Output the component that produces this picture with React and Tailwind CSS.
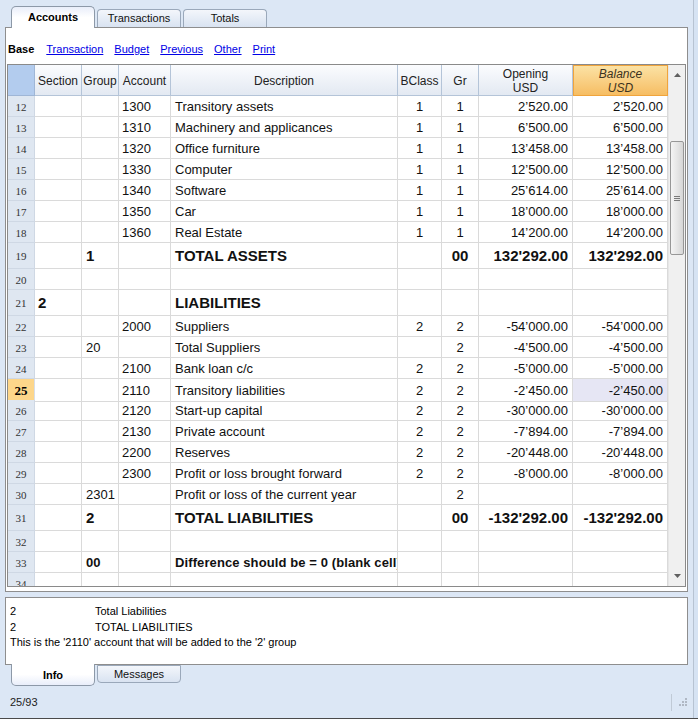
import React from 'react';

const cols = 'grid grid-cols-[27px_47px_37px_52px_227px_44px_37px_94px_95px]';

const rows = [
  { n: 12, acc: '1300', desc: 'Transitory assets', bc: '1', gr: '1', open: '2’520.00', bal: '2’520.00' },
  { n: 13, acc: '1310', desc: 'Machinery and applicances', bc: '1', gr: '1', open: '6’500.00', bal: '6’500.00' },
  { n: 14, acc: '1320', desc: 'Office furniture', bc: '1', gr: '1', open: '13’458.00', bal: '13’458.00' },
  { n: 15, acc: '1330', desc: 'Computer', bc: '1', gr: '1', open: '12’500.00', bal: '12’500.00' },
  { n: 16, acc: '1340', desc: 'Software', bc: '1', gr: '1', open: '25’614.00', bal: '25’614.00' },
  { n: 17, acc: '1350', desc: 'Car', bc: '1', gr: '1', open: '18’000.00', bal: '18’000.00' },
  { n: 18, acc: '1360', desc: 'Real Estate', bc: '1', gr: '1', open: '14’200.00', bal: '14’200.00' },
  { n: 19, big: true, group: '1', desc: 'TOTAL ASSETS', gr: '00', open: "132'292.00", bal: "132'292.00" },
  { n: 20 },
  { n: 21, big: true, section: '2', desc: 'LIABILITIES' },
  { n: 22, acc: '2000', desc: 'Suppliers', bc: '2', gr: '2', open: '-54’000.00', bal: '-54’000.00' },
  { n: 23, group: '20', desc: 'Total Suppliers', gr: '2', open: '-4’500.00', bal: '-4’500.00' },
  { n: 24, acc: '2100', desc: 'Bank loan c/c', bc: '2', gr: '2', open: '-5’000.00', bal: '-5’000.00' },
  { n: 25, acc: '2110', desc: 'Transitory liabilities', bc: '2', gr: '2', open: '-2’450.00', bal: '-2’450.00', sel: true },
  { n: 26, acc: '2120', desc: 'Start-up capital', bc: '2', gr: '2', open: '-30’000.00', bal: '-30’000.00' },
  { n: 27, acc: '2130', desc: 'Private account', bc: '2', gr: '2', open: '-7’894.00', bal: '-7’894.00' },
  { n: 28, acc: '2200', desc: 'Reserves', bc: '2', gr: '2', open: '-20’448.00', bal: '-20’448.00' },
  { n: 29, acc: '2300', desc: 'Profit or loss brought forward', bc: '2', gr: '2', open: '-8’000.00', bal: '-8’000.00' },
  { n: 30, group: '2301', desc: 'Profit or loss of the current year', gr: '2' },
  { n: 31, big: true, group: '2', desc: 'TOTAL LIABILITIES', gr: '00', open: "-132'292.00", bal: "-132'292.00" },
  { n: 32 },
  { n: 33, strong: true, group: '00', desc: 'Difference should be = 0 (blank cell)' },
  { n: 34 },
];

const cell = 'flex items-center pt-[2px] border-r border-b border-[#dadada] overflow-hidden whitespace-nowrap';

function Row({ r }) {
  const h = r.big ? 'h-[26px]' : 'h-[21px]';
  const txt = r.big
    ? 'text-[15px] font-bold'
    : r.strong
      ? 'text-[13px] font-bold tracking-[0.1px]'
      : 'text-[13px]';
  const num = r.big ? 'text-[15px] font-bold' : 'text-[13px]';
  return (
    <div className={`${cols} ${h} shrink-0 text-[#111]`}>
      <div
        className={`flex items-center justify-center pt-[2px] border-r border-b font-['Liberation_Serif',serif] ${
          r.sel
            ? 'bg-[#fdd68a] border-r-[#d8dee8] border-b-[#f0a030] text-[13px] font-bold text-black'
            : 'bg-[#dfe7f1] border-[#cfd8e4] text-[11px] text-[#333]'
        }`}
      >
        {r.n}
      </div>
      <div className={`${cell} pl-[3px] ${txt}`}>{r.section}</div>
      <div className={`${cell} pl-[4px] ${txt}`}>{r.group}</div>
      <div className={`${cell} pl-[3px] text-[13px]`}>{r.acc}</div>
      <div className={`${cell} pl-[4px] ${txt}`}>{r.desc}</div>
      <div className={`${cell} justify-center text-[13px]`}>{r.bc}</div>
      <div className={`${cell} justify-center ${num}`}>{r.gr}</div>
      <div className={`${cell} justify-end pr-[4px] ${num}`}>{r.open}</div>
      <div className={`${cell} justify-end pr-[4px] ${num} ${r.sel ? 'bg-[#e6e6f4]' : ''}`}>{r.bal}</div>
    </div>
  );
}

function HeaderCell({ children, className = '' }) {
  return (
    <div
      className={`flex flex-col items-center justify-center pt-px border-r border-b border-[#b4c4d8] bg-gradient-to-b from-[#fbfcfe] to-[#e3e9f2] text-[12px] leading-[14px] text-[#222] ${className}`}
    >
      {children}
    </div>
  );
}

function ScrollBar() {
  return (
    <div className="flex w-[17px] flex-col border-l border-[#e6e6e6] bg-[#f0f0f0]">
      <div className="flex h-[20px] items-center justify-center">
        <svg width="7" height="4" viewBox="0 0 7 4">
          <path d="M0 4 L3.5 0 L7 4 Z" fill="#606060" />
        </svg>
      </div>
      <div className="h-[56px]" />
      <div className="mx-[1px] flex h-[114px] items-center justify-center rounded-[2px] border border-[#979797] bg-gradient-to-r from-[#f4f4f4] via-[#e6e6e6] to-[#d6d6d6]">
        <div className="flex flex-col gap-[1px]">
          <div className="h-px w-[6px] bg-[#7a7a7a]" />
          <div className="h-px w-[6px] bg-[#7a7a7a]" />
          <div className="h-px w-[6px] bg-[#7a7a7a]" />
        </div>
      </div>
      <div className="flex-1" />
      <div className="flex h-[20px] items-center justify-center">
        <svg width="7" height="4" viewBox="0 0 7 4">
          <path d="M0 0 L3.5 4 L7 0 Z" fill="#606060" />
        </svg>
      </div>
    </div>
  );
}

export default function App() {
  return (
    <div className="flex h-[719px] w-[698px] border-b border-[#4a4a4a] bg-[#dce7f5] font-['Liberation_Sans',Arial,sans-serif]">
      <div className="flex w-[693px] flex-col">
        {/* top tabs */}
        <div className="relative z-10 flex h-[27px] items-end gap-[2px] pl-[11px] text-[11px]">
          <div className="-mb-px flex h-[22px] w-[84px] items-center justify-center rounded-t-[5px] border border-b-0 border-[#8d99a8] bg-gradient-to-b from-[#e9eefa] via-white to-white pb-[1px] font-bold text-black">
            Accounts
          </div>
          <div className="flex h-[18px] w-[84px] items-center justify-center rounded-t-[4px] border border-b-0 border-[#9aa8ba] bg-gradient-to-b from-[#f3f6fb] to-[#d9e3f1] text-[#111]">
            Transactions
          </div>
          <div className="flex h-[18px] w-[84px] items-center justify-center rounded-t-[4px] border border-b-0 border-[#9aa8ba] bg-gradient-to-b from-[#f3f6fb] to-[#d9e3f1] text-[#111]">
            Totals
          </div>
        </div>

        {/* main panel */}
        <div className="mx-[5px] flex h-[565px] flex-col border border-[#8e8e8e] bg-white">
          <div className="flex h-[36px] items-center gap-[11px] pl-[2px] pt-[6px] text-[11px] leading-[13px]">
            <span className="font-bold text-black">Base</span>
            <span className="ml-[1px] text-[#0000e6] underline">Transaction</span>
            <span className="text-[#0000e6] underline">Budget</span>
            <span className="text-[#0000e6] underline">Previous</span>
            <span className="text-[#0000e6] underline">Other</span>
            <span className="text-[#0000e6] underline">Print</span>
          </div>

          <div className="mx-px flex h-[523px] border border-[#8a8a8a] bg-white">
            <div className="flex w-[660px] flex-col overflow-hidden">
              <div className={`${cols} h-[31px] shrink-0`}>
                <div className="border-r border-b border-[#9fb6d6] bg-[#b3ccee]" />
                <HeaderCell>Section</HeaderCell>
                <HeaderCell>Group</HeaderCell>
                <HeaderCell>Account</HeaderCell>
                <HeaderCell>Description</HeaderCell>
                <HeaderCell>BClass</HeaderCell>
                <HeaderCell>Gr</HeaderCell>
                <HeaderCell>
                  <span>Opening</span>
                  <span>USD</span>
                </HeaderCell>
                <div className="flex flex-col items-center justify-center pt-px border border-[#f0a43c] bg-gradient-to-b from-[#fbe2a4] to-[#f6bd62] text-[12px] italic leading-[14px] text-[#3d3320]">
                  <span>Balance</span>
                  <span>USD</span>
                </div>
              </div>
              {rows.map((r) => (
                <Row key={r.n} r={r} />
              ))}
            </div>
            <ScrollBar />
          </div>
        </div>

        {/* info panel */}
        <div className="mx-[5px] mt-[5px] h-[68px] border border-[#8e8e8e] bg-white px-[4px] pt-[6px] text-[11px] leading-[15.5px] text-black">
          <div className="grid grid-cols-[85px_1fr]">
            <span>2</span>
            <span>Total Liabilities</span>
            <span>2</span>
            <span>TOTAL LIABILITIES</span>
          </div>
          <div>This is the '2110' account that will be added to the '2' group</div>
        </div>

        {/* bottom tabs */}
        <div className="relative z-10 -mt-px flex items-start gap-[2px] pl-[11px] text-[11px]">
          <div className="flex h-[22px] w-[84px] items-center justify-center rounded-b-[5px] border border-t-0 border-[#8d99a8] bg-gradient-to-t from-[#e9eefa] via-white to-white pt-[2px] font-bold text-black">
            Info
          </div>
          <div className="mt-px flex h-[18px] w-[84px] items-center justify-center rounded-b-[4px] border border-[#9aa8ba] bg-gradient-to-b from-[#f3f6fb] to-[#d9e3f1] text-[#111]">
            Messages
          </div>
        </div>

        {/* status bar */}
        <div className="flex flex-1 items-center justify-between pl-[10px] pr-[6px] text-[11px] text-[#222]">
          <span>25/93</span>
          <div className="flex items-center gap-[7px]">
            <div className="h-[17px] w-px bg-[#c0cad6]" />
            <svg width="8" height="8" viewBox="0 0 8 8">
              <rect x="6" y="0" width="2" height="2" fill="#b0b8c4" />
              <rect x="3" y="3" width="2" height="2" fill="#b0b8c4" />
              <rect x="6" y="3" width="2" height="2" fill="#b0b8c4" />
              <rect x="0" y="6" width="2" height="2" fill="#b0b8c4" />
              <rect x="3" y="6" width="2" height="2" fill="#b0b8c4" />
              <rect x="6" y="6" width="2" height="2" fill="#b0b8c4" />
            </svg>
          </div>
        </div>
      </div>
      <div className="flex-1 border-l border-[#b7c3d2] bg-[#d6e3f3]" />
    </div>
  );
}
